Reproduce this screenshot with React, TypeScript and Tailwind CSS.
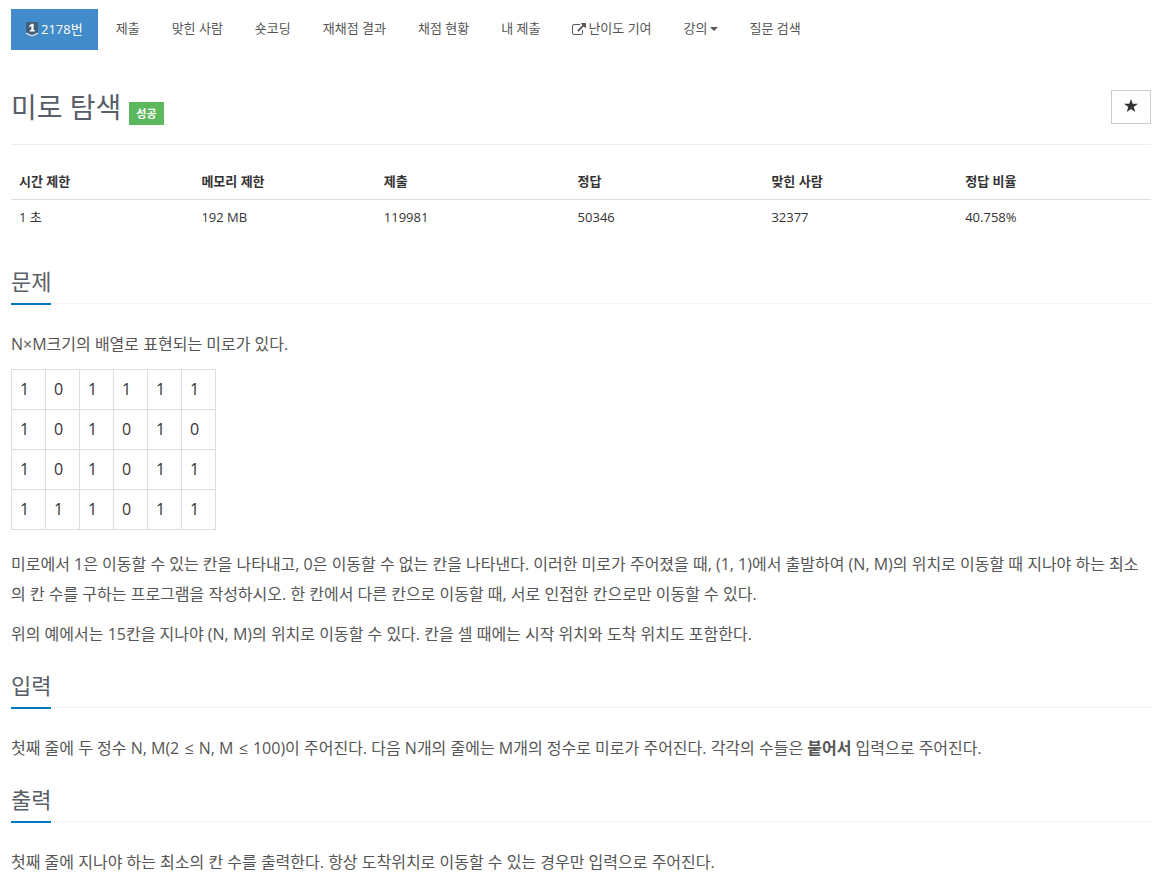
import type { ReactNode } from "react";

interface NavItem {
  label: string;
  icon?: ReactNode;
  caret?: boolean;
}

function TierBadge() {
  return (
    <svg viewBox="0 0 12 15" className="h-[15px] w-3" aria-hidden="true">
      <path d="M0 0h12v11.500L6 14.500 0 11.500z" fill="#435f7a" />
      <path d="M0 10.500l6 2.500 6-2.500v1.500l-6 2.500-6-2.500z" fill="#d5e4f1" />
      <path d="M3.400 3.400L5.600 1.800h2V8h1.200v1.400H3.800V8h1.500V4.300l-1.900.9z" fill="#fff" />
    </svg>
  );
}

function ExternalLinkIcon() {
  return (
    <svg viewBox="0 0 1792 1536" className="h-3 w-[14px]" fill="currentColor" aria-hidden="true">
      <path d="M1408 928v320q0 119-84.500 203.500T1120 1536H288q-119 0-203.500-84.500T0 1248V416q0-119 84.500-203.500T288 128h704q14 0 23 9t9 23v64q0 14-9 23t-23 9H288q-66 0-113 47t-47 113v832q0 66 47 113t113 47h832q66 0 113-47t47-113V928q0-14 9-23t23-9h64q14 0 23 9t9 23zm384-864v512q0 26-19 45t-45 19-45-19l-176-176-652 652q-10 10-23 10t-23-10L695 983q-10-10-10-23t10-23l652-652-176-176q-19-19-19-45t19-45 45-19h512q26 0 45 19t19 45z" />
    </svg>
  );
}

const navItems: NavItem[] = [
  { label: "제출" },
  { label: "맞힌 사람" },
  { label: "숏코딩" },
  { label: "재채점 결과" },
  { label: "채점 현황" },
  { label: "내 제출" },
  { label: "난이도 기여", icon: <ExternalLinkIcon /> },
  { label: "강의", caret: true },
  { label: "질문 검색" },
];

const stats = [
  { label: "시간 제한", value: "1 초", width: "w-[16%]" },
  { label: "메모리 제한", value: "192 MB", width: "w-[16%]" },
  { label: "제출", value: "119981", width: "w-[17%]" },
  { label: "정답", value: "50346", width: "w-[17%]" },
  { label: "맞힌 사람", value: "32377", width: "w-[17%]" },
  { label: "정답 비율", value: "40.758%", width: "w-[17%]" },
];

const maze = ["101111", "101010", "101011", "111011"];

function Headline({ children }: { children: ReactNode }) {
  return (
    <div className="mb-[25px] border-b border-dotted border-[#e4e9f0]">
      <h2 className="-mb-[2px] inline-block border-b-2 border-[#0076c0] pb-[5px] align-top text-[22px] leading-[33px] text-[#585f69]">
        {children}
      </h2>
    </div>
  );
}

export default function App() {
  return (
    <main className="bg-white pt-[9px] pr-[17px] pb-4 pl-[11px] font-['Open_Sans','Noto_Sans_CJK_KR',sans-serif] text-[13px] text-[#333]">
      {/* MENU */}
      <nav>
        <ul className="flex flex-wrap gap-[2px] leading-[21px]">
          <li className="mr-[1px]">
            <a href="#problem" className="flex items-center gap-[3px] bg-[#428bca] px-[15px] py-[10px] text-white">
              <TierBadge />
              2178번
            </a>
          </li>
          {navItems.map((item) => (
            <li key={item.label}>
              <a href="#menu" className="flex items-center gap-[2px] px-[15px] pt-[9px] pb-[11px] text-[#555]">
                {item.icon}
                {item.label}
                {item.caret && (
                  <span className="border-x-4 border-t-4 border-x-transparent border-t-[#555]" />
                )}
              </a>
            </li>
          ))}
        </ul>
      </nav>

      {/* TITLE */}
      <header className="mt-10 flex items-start justify-between border-b border-[#eee] pb-5">
        <div className="flex items-end gap-2">
          <h1 className="text-[28px] leading-[34px] text-[#585f69]">미로 탐색</h1>
          <span className="-mb-[1px] bg-[#5cb85c] px-[7px] text-[11px] leading-[23px] font-bold text-white">성공</span>
        </div>
        <button
          type="button"
          aria-label="즐겨찾기"
          className="flex h-[34px] w-10 items-center justify-center border border-[#ccc] pb-[3px] text-[#333]"
        >
          <svg viewBox="0 0 14 13" className="h-[13px] w-[14px]" fill="currentColor" aria-hidden="true">
            <path d="M7 0l1.700 4.700H14L9.700 7.900l1.600 5.100L7 9.900 2.700 13l1.600-5.100L0 4.700h5.300z" />
          </svg>
        </button>
      </header>

      {/* LIMITS */}
      <table className="mt-[19px] w-full table-fixed text-left leading-[19px]">
        <thead>
          <tr className="border-b border-[#ddd]">
            {stats.map((s) => (
              <th key={s.label} className={`${s.width} p-2 font-bold`}>{s.label}</th>
            ))}
          </tr>
        </thead>
        <tbody>
          <tr>
            {stats.map((s) => (
              <td key={s.label} className="p-2">{s.value}</td>
            ))}
          </tr>
        </tbody>
      </table>

      {/* DESCRIPTION */}
      <section id="problem" className="mt-[30px] text-[16px] leading-[30px] text-[#555]">
        <Headline>문제</Headline>
        <p className="mb-[10px]">N×M크기의 배열로 표현되는 미로가 있다.</p>
        <table className="mb-[19px] table-fixed border-collapse leading-[23px] text-[#333]">
          <tbody>
            {maze.map((row, i) => (
              <tr key={i}>
                {row.split("").map((cell, j) => (
                  <td key={j} className="w-[34px] border border-[#ddd] p-2">{cell}</td>
                ))}
              </tr>
            ))}
          </tbody>
        </table>
        <p className="mb-[10px]">
          미로에서 1은 이동할 수 있는 칸을 나타내고, 0은 이동할 수 없는 칸을 나타낸다. 이러한 미로가 주어졌을 때, (1, 1)에서 출발하여 (N, M)의 위치로 이동할 때 지나야 하는 최소의 칸 수를 구하는 프로그램을 작성하시오. 한 칸에서 다른 칸으로 이동할 때, 서로 인접한 칸으로만 이동할 수 있다.
        </p>
        <p>위의 예에서는 15칸을 지나야 (N, M)의 위치로 이동할 수 있다. 칸을 셀 때에는 시작 위치와 도착 위치도 포함한다.</p>
      </section>

      {/* INPUT */}
      <section className="mt-5 text-[16px] leading-[30px] text-[#555]">
        <Headline>입력</Headline>
        <p>
          첫째 줄에 두 정수 N, M(2 <span className="px-[1px]">≤</span> N, M <span className="px-[1px]">≤</span> 100)이 주어진다. 다음 N개의 줄에는 M개의 정수로 미로가 주어진다. 각각의 수들은 <strong className="font-bold">붙어서</strong> 입력으로 주어진다.
        </p>
      </section>

      {/* OUTPUT */}
      <section className="mt-5 text-[16px] leading-[30px] text-[#555]">
        <Headline>출력</Headline>
        <p>첫째 줄에 지나야 하는 최소의 칸 수를 출력한다. 항상 도착위치로 이동할 수 있는 경우만 입력으로 주어진다.</p>
      </section>
    </main>
  );
}
